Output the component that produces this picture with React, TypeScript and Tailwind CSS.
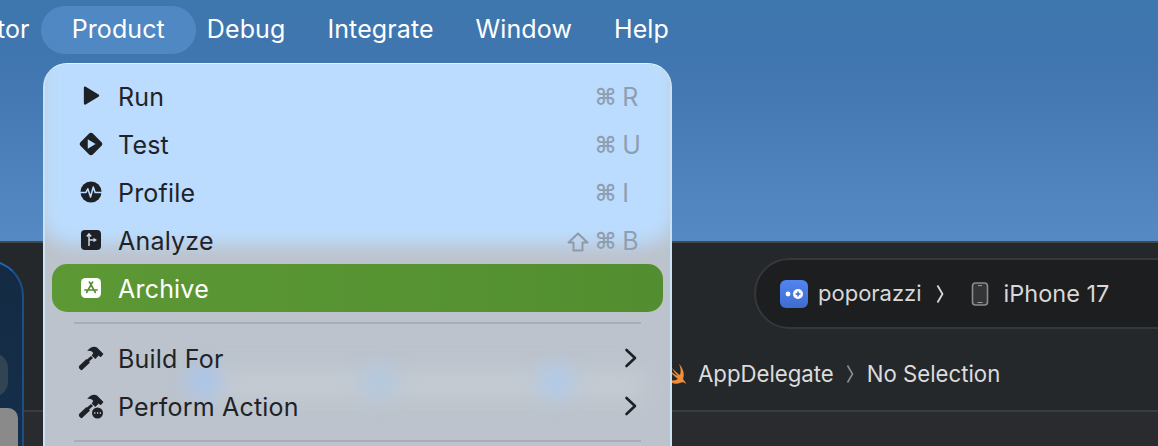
import { ReactNode } from "react";

const font = "font-['Inter','Noto_Sans',sans-serif]";

const topMenus = ["tor", "Product", "Debug", "Integrate", "Window", "Help"];

function RunIcon() {
  return (
    <svg width="20" height="22" viewBox="0 0 18 20">
      <path d="M2.500 2.600c0-1 .9-1.400 1.700-1l11.600 7c.9.500.9 1.600 0 2.100l-11.600 7c-.8.400-1.700 0-1.700-1z" fill="#1d2125" />
    </svg>
  );
}

function TestIcon() {
  return (
    <svg width="24" height="24" viewBox="0 0 26 26">
      <path d="M11 1.600c1.100-1.100 2.900-1.100 4 0l9.400 9.400c1.100 1.100 1.100 2.900 0 4L15 24.400c-1.100 1.100-2.900 1.100-4 0L1.600 15c-1.100-1.100-1.100-2.900 0-4z" fill="#1d2125" />
      <path d="M9.500 7.800v10.400L18 13z" fill="#bbdcfe" />
    </svg>
  );
}

function ProfileIcon() {
  return (
    <svg width="22" height="22" viewBox="0 0 24 24">
      <circle cx="12" cy="12" r="11.500" fill="#1d2125" />
      <path d="M0 12.500h6.500l2-4 3 9 3-11 2 6H24" fill="none" stroke="#bbdcfe" strokeWidth="1.700" strokeLinejoin="round" />
    </svg>
  );
}

function AnalyzeIcon() {
  return (
    <svg width="20" height="20" viewBox="0 0 20 20">
      <rect width="20" height="20" rx="4" fill="#1d2125" />
      <path d="M8 16V4M5.800 6.500 8 4l2.200 2.500M8 10h5" fill="none" stroke="#c5d6e6" strokeWidth="1.500" />
      <path d="M12.500 7.800 16 10l-3.500 2.200z" fill="#c5d6e6" />
    </svg>
  );
}

function ArchiveIcon() {
  return (
    <svg width="20" height="20" viewBox="0 0 20 20">
      <rect width="20" height="20" rx="4.500" fill="#ffffff" />
      <path d="M11.600 4 5.600 14.500M8.400 4l6 10.500M3.800 12h12.400" fill="none" stroke="#54902f" strokeWidth="1.600" strokeLinecap="round" />
    </svg>
  );
}

function HammerIcon({ more }: { more?: boolean }) {
  return (
    <svg width="28" height="26" viewBox="0 0 28 26">
      <path d="M2.500 20.500 9.500 14l3.500 3.600-7.400 7c-.7.700-1.600.7-2.300 0l-1-1c-.6-.8-.6-2.400.2-3.100z" fill="#1d2125" />
      <path d="M9 15.500 14 11l2 2-5 4.500z" fill="#1d2125" />
      <path d="M10.500 5.500C13 2.400 17 .6 20 2.500l6 6c.4.400.4.800.1 1.100l-2 2.200c-.4.400-.8.300-1.200 0l-1.200-1.200-3.400 3.400-3.600-3.600 1.600-2.400c-1.600-2-3.500-2.600-5.600-2z" fill="#1d2125" />
      {more && (
        <g>
          <circle cx="20.500" cy="20" r="6.600" fill="#bcc3cc" />
          <circle cx="20.500" cy="20" r="5.500" fill="#1d2125" />
          <path d="M17.200 20h1.200M20 20h1.200M22.800 20H24" stroke="#d5dae0" strokeWidth="1.600" />
        </g>
      )}
    </svg>
  );
}

function Chevron() {
  return (
    <svg width="14" height="20" viewBox="0 0 14 20">
      <path d="M2.500 2 11 10l-8.500 8" fill="none" stroke="#1d2125" strokeWidth="2.600" strokeLinecap="round" strokeLinejoin="round" />
    </svg>
  );
}

function ShiftIcon() {
  return (
    <svg width="22" height="20" viewBox="0 0 22 20">
      <path d="M11 1.500 20.500 10.500H15.500V18.500H6.500V10.500H1.500z" fill="none" stroke="#8e9aa8" strokeWidth="2" strokeLinejoin="round" />
    </svg>
  );
}

function Shortcut({ keys, shift }: { keys: string; shift?: boolean }) {
  return (
    <span className="flex w-[71px] items-center gap-[6px] pt-[3px] text-[25px] text-[#8e9fb2]">
      <span className="flex w-[22px] shrink-0 justify-center">{shift && <ShiftIcon />}</span>
      <span className="font-['DejaVu_Sans',sans-serif] text-[23px] font-bold leading-none">⌘</span>
      <span>{keys}</span>
    </span>
  );
}

function MenuRow({
  icon,
  label,
  right,
  active,
}: {
  icon: ReactNode;
  label: string;
  right?: ReactNode;
  active?: boolean;
}) {
  return (
    <div
      className={`flex h-[48px] items-center justify-between rounded-[15px] pl-[22px] pr-[25px] ${
        active ? "bg-[linear-gradient(90deg,#5c9935,#528e2f)] text-white" : "text-[#1f2327]"
      }`}
    >
      <div className="flex items-center">
        <span className="flex w-[44px] justify-center pr-[10px]">{icon}</span>
        <span className="pt-[4px] text-[25px] tracking-[0.2px]">{label}</span>
      </div>
      {right}
    </div>
  );
}

export default function App() {
  return (
    <div className={`relative flex h-[446px] w-[1158px] flex-col overflow-hidden bg-[#25282b] ${font}`}>
      {/* desktop wallpaper with the menu bar */}
      <div className="h-[243px] shrink-0 border-b-2 border-[#45484b] bg-[linear-gradient(180deg,#3e76ae_0%,#4176b0_30%,#568ac5_100%)]">
        <nav className="-ml-[24px] flex items-center pt-[6px] text-[25px] tracking-[0.1px] text-white">
          {topMenus.map((m) => (
            <span
              key={m}
              className={`flex h-[48px] items-center rounded-[24px] ${
                m === "Product" ? "-mx-[10px] bg-[#5088c3] px-[31px]" : "px-[21px]"
              }`}
            >
              {m}
            </span>
          ))}
        </nav>
      </div>

      {/* xcode toolbar */}
      <div className="flex h-[101px] shrink-0 items-center pl-[754px]">
        <div className="flex h-[71px] w-[480px] shrink-0 items-center rounded-l-[36px] border-2 border-[#35383b] bg-[#1d1e20] pl-[24px] text-[#d8d8d9]">
          <svg width="28" height="28" viewBox="0 0 28 28">
            <defs>
              <linearGradient id="appTile" x1="0" y1="0" x2="0" y2="1">
                <stop offset="0" stopColor="#5284f0" />
                <stop offset="1" stopColor="#3e6dd0" />
              </linearGradient>
            </defs>
            <rect width="28" height="28" rx="6" fill="url(#appTile)" />
            <circle cx="8" cy="14" r="2.400" fill="#fff" />
            <circle cx="18" cy="14" r="5" fill="#fff" />
            <path d="M15.500 14h5M18 11.500v5" stroke="#3e6dd0" strokeWidth="1.500" />
          </svg>
          <span className="ml-[10px] text-[22px]">poporazzi</span>
          <svg className="ml-[14px]" width="8" height="20" viewBox="0 0 8 20">
            <path d="M1.500 1.500 6.500 10l-5 8.500" fill="none" stroke="#d8d8d9" strokeWidth="1.800" />
          </svg>
          <svg className="ml-[27px]" width="18" height="24" viewBox="0 0 18 24">
            <rect x="1.500" y="1" width="15" height="22" rx="3" fill="#333537" stroke="#8b8c8e" strokeWidth="1.600" />
            <path d="M7 3.600h4M6.500 20.500h5" stroke="#9a9b9d" strokeWidth="1" />
          </svg>
          <span className="ml-[15px] text-[23.5px]">iPhone 17</span>
        </div>
      </div>

      {/* jump bar */}
      <div className="flex h-[66px] shrink-0 items-center pb-[6px] pl-[666px] text-[22.2px] text-[#dcdcdd]">
        <svg width="22" height="24" viewBox="0 0 22 24">
          <path d="M13 2C17 6 19 12 17 17C18 19 20 20 20 22C18 20 16 20 14 21C9 23 4 21 1 16C5 19 9 19 12 17C8 14 5 11 2 7C6 10 9 13 12 14C9 11 7 9 6 6C9 9 12 12 14 13C15 10 15 6 13 2z" fill="#ef8f3c" />
        </svg>
        <span className="ml-[10px]">AppDelegate</span>
        <svg className="ml-[12px]" width="8" height="20" viewBox="0 0 8 20">
          <path d="M1.500 1.500 6.500 10l-5 8.500" fill="none" stroke="#8a8b8d" strokeWidth="1.600" />
        </svg>
        <span className="ml-[13px]">No Selection</span>
      </div>
      <div className="h-[2px] shrink-0 bg-[#3a3c3f]" />
      <div className="flex-1 bg-[#2a2b2f]" />

      {/* left panel, sits over the editor */}
      <div className="absolute -left-[60px] top-[260px] h-[220px] w-[84px] rounded-[36px] border-2 border-[#1d4f86] border-t-[#1f65b2] bg-[linear-gradient(180deg,#132a42,#16304c)]">
        <div className="absolute left-[36px] top-[91px] h-[44px] w-[30px] rounded-full bg-[#304454]" />
        <div className="absolute left-[48px] top-[146px] h-[80px] w-[28px] rounded-t-[10px] bg-[#8a8a8a]" />
      </div>

      {/* open product menu */}
      <div className="absolute left-[43px] top-[63px] h-[420px] w-[629px] overflow-hidden rounded-[24px] border-x-2 border-t border-x-[#c9e3f5] border-t-[#d6f8ff] bg-[#bcc3cc] px-[7px] pt-[8px]">
        <div className="absolute -left-[6px] -right-[6px] -top-[20px] h-[201px] rounded-b-[34px] bg-[#bbdcfe] blur-[9px]" />
        <div className="absolute left-[150px] top-[309px] h-[24px] w-[450px] bg-[#c6cdd4] blur-[12px]" />
        <div className="absolute left-[140px] top-[299px] h-[36px] w-[36px] rounded-full bg-[#a9c4ea] blur-[10px]" />
        <div className="absolute left-[316px] top-[299px] h-[36px] w-[36px] rounded-full bg-[#b3c8df] blur-[10px]" />
        <div className="absolute left-[493px] top-[299px] h-[36px] w-[36px] rounded-full bg-[#b0cae8] blur-[10px]" />
        <div className="relative">
          <MenuRow icon={<RunIcon />} label="Run" right={<Shortcut keys="R" />} />
          <MenuRow icon={<TestIcon />} label="Test" right={<Shortcut keys="U" />} />
          <MenuRow icon={<ProfileIcon />} label="Profile" right={<Shortcut keys="I" />} />
          <MenuRow icon={<AnalyzeIcon />} label="Analyze" right={<Shortcut keys="B" shift />} />
          <MenuRow icon={<ArchiveIcon />} label="Archive" active />
          <div className="mx-[22px] mb-[10px] mt-[10px] h-[2px] bg-[#a9adb6]" />
          <MenuRow icon={<HammerIcon />} label="Build For" right={<Chevron />} />
          <MenuRow icon={<HammerIcon more />} label="Perform Action" right={<Chevron />} />
          <div className="mx-[22px] mt-[10px] h-[2px] bg-[#a9adb6]" />
        </div>
      </div>
    </div>
  );
}
